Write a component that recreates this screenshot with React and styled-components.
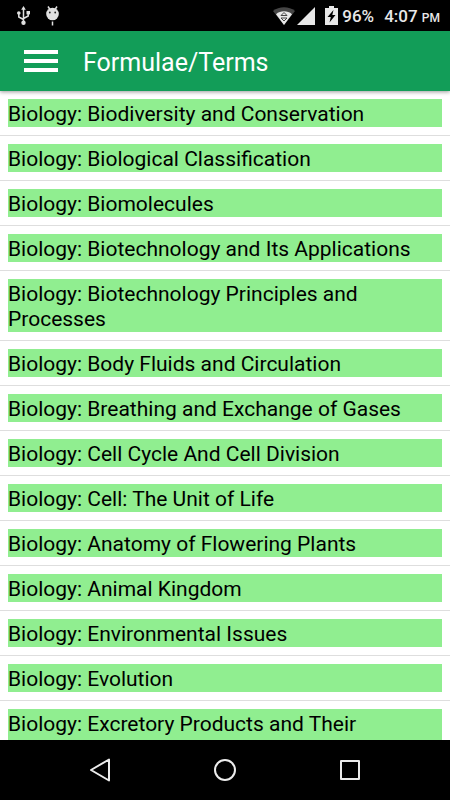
import React from 'react';
import styled, { createGlobalStyle } from 'styled-components';

const GlobalStyle = createGlobalStyle`
  * {
    box-sizing: border-box;
  }

  body {
    margin: 0;
    background: #fff;
    font-family: Roboto, sans-serif;
  }
`;

const Screen = styled.div`
  display: flex;
  flex-direction: column;
  height: 100vh;
  overflow: hidden;
`;

const StatusBar = styled.div`
  display: flex;
  flex: none;
  align-items: center;
  justify-content: space-between;
  height: 31px;
  padding: 0 10px 0 17px;
  background: #000;
  color: #e8e8e8;
`;

const StatusGroup = styled.div`
  display: flex;
  align-items: center;
  gap: ${({ $gap }) => $gap}px;

  svg {
    display: block;
  }
`;

const StatusText = styled.span`
  display: block;
  padding-top: 1px;
  font-size: 17px;
  line-height: 24px;
  font-weight: 500;
`;

const Meridiem = styled.small`
  font-size: 12px;
  line-height: 12px;
`;

const Header = styled.header`
  display: flex;
  flex: none;
  align-items: center;
  gap: 25px;
  height: 60px;
  padding: 0 24px;
  background: #129d58;
  box-shadow: 0 1px 4px rgba(0, 0, 0, 0.4);
  z-index: 1;
`;

const MenuButton = styled.button`
  display: flex;
  flex-direction: column;
  gap: 5px;
  width: 34px;
  padding: 0;
  border: none;
  background: none;
  cursor: pointer;
`;

const MenuLine = styled.span`
  height: 4px;
  background: #fff;
`;

const Title = styled.h1`
  margin: 0;
  padding-top: 4px;
  color: #fff;
  font-size: 25px;
  font-weight: 400;
  line-height: 32px;
`;

const TopicList = styled.ul`
  flex: 1;
  min-height: 0;
  margin: 0;
  padding: 0;
  overflow-y: auto;
  scrollbar-width: none;
  list-style: none;
`;

const TopicRow = styled.li`
  padding: 8px;
  border-bottom: 1px solid #dedede;
`;

const TopicLabel = styled.div`
  padding: 3px 0 0;
  background: #90ee90;
  color: #000;
  font-size: 21px;
  line-height: 25px;
`;

const NavBar = styled.nav`
  display: flex;
  flex: none;
  align-items: center;
  justify-content: center;
  height: 60px;
  background: #000;
`;

const NavButton = styled.button`
  display: flex;
  justify-content: center;
  width: 125px;
  padding: 0;
  border: none;
  background: none;
  color: #ececec;
  cursor: pointer;
`;

const UsbIcon = () => (
  <svg width="13" height="19" viewBox="0 0 13 19" fill="none" stroke="#e0e0e0" strokeWidth="1.5">
    <path d="M6.5 3v13M6.5 13.5L1.8 11V7M6.5 12.5l4.7-2.5V6" />
    <g fill="#e0e0e0" stroke="none">
      <path d="M6.5 0l2.3 3.8H4.2z" />
      <circle cx="1.8" cy="7" r="1.8" />
      <path d="M9.5 5H13v3.4H9.5z" />
      <circle cx="6.5" cy="16.8" r="2.2" />
    </g>
  </svg>
);

const DebugIcon = () => (
  <svg width="13" height="20" viewBox="0 0 13 20">
    <path d="M2 0.5l2 3M11 0.5l-2 3M6.5 15.5v4" stroke="#e0e0e0" strokeWidth="1.5" />
    <circle cx="6.5" cy="8" r="6.3" fill="#e0e0e0" />
    <circle cx="3.8" cy="6.5" r="0.9" fill="#222" />
    <circle cx="9.2" cy="6.5" r="0.9" fill="#222" />
  </svg>
);

const WifiIcon = () => (
  <svg width="22" height="18" viewBox="0 0 22 18">
    <path d="M0 4C6-1 16-1 22 4L11 18z" fill="#454545" />
    <path d="M3 7.2c4.5-3.8 11.5-3.8 16 0L11 18z" fill="#e8e8e8" />
    <path d="M11 5.5l3 3H8zM11 14l3-3H8z" fill="none" stroke="#444" />
  </svg>
);

const SignalIcon = () => (
  <svg width="18" height="18" viewBox="0 0 18 18">
    <path d="M18 0v18H0z" fill="#e8e8e8" />
  </svg>
);

const BatteryIcon = () => (
  <svg width="13" height="19" viewBox="0 0 13 19">
    <path d="M4 0h5v2h4v17H0V2h4z" fill="#e8e8e8" />
    <path d="M8.5 4L2.5 11h3.3L4.5 16.5l6-7.5H7.3z" fill="#000" />
  </svg>
);

const topics = [
  'Biodiversity and Conservation',
  'Biological Classification',
  'Biomolecules',
  'Biotechnology and Its Applications',
  'Biotechnology Principles and Processes',
  'Body Fluids and Circulation',
  'Breathing and Exchange of Gases',
  'Cell Cycle And Cell Division',
  'Cell: The Unit of Life',
  'Anatomy of Flowering Plants',
  'Animal Kingdom',
  'Environmental Issues',
  'Evolution',
  'Excretory Products and Their Elimination',
];

const App = () => (
  <Screen>
    <GlobalStyle />
    <StatusBar>
      <StatusGroup $gap={16}>
        <UsbIcon />
        <DebugIcon />
      </StatusGroup>
      <StatusGroup $gap={10}>
        <StatusGroup $gap={2}>
          <WifiIcon />
          <SignalIcon />
        </StatusGroup>
        <StatusGroup $gap={4}>
          <BatteryIcon />
          <StatusText>96%</StatusText>
        </StatusGroup>
        <StatusText>
          4:07 <Meridiem>PM</Meridiem>
        </StatusText>
      </StatusGroup>
    </StatusBar>
    <Header>
      <MenuButton aria-label="Menu">
        <MenuLine />
        <MenuLine />
        <MenuLine />
      </MenuButton>
      <Title>Formulae/Terms</Title>
    </Header>
    <TopicList>
      {topics.map((topic) => (
        <TopicRow key={topic}>
          <TopicLabel>{`Biology: ${topic}`}</TopicLabel>
        </TopicRow>
      ))}
    </TopicList>
    <NavBar>
      <NavButton aria-label="Back">
        <svg width="24" height="24" viewBox="0 0 24 24" fill="none" stroke="currentColor" strokeWidth="2" strokeLinejoin="round">
          <path d="M21 1.5v21L3 12z" />
        </svg>
      </NavButton>
      <NavButton aria-label="Home">
        <svg width="24" height="24" viewBox="0 0 24 24" fill="none" stroke="currentColor" strokeWidth="2">
          <circle cx="12" cy="12" r="10" />
        </svg>
      </NavButton>
      <NavButton aria-label="Recent apps">
        <svg width="24" height="24" viewBox="0 0 24 24" fill="none" stroke="currentColor" strokeWidth="2" strokeLinejoin="round">
          <path d="M3 3h18v18H3z" />
        </svg>
      </NavButton>
    </NavBar>
  </Screen>
);

export default App;
